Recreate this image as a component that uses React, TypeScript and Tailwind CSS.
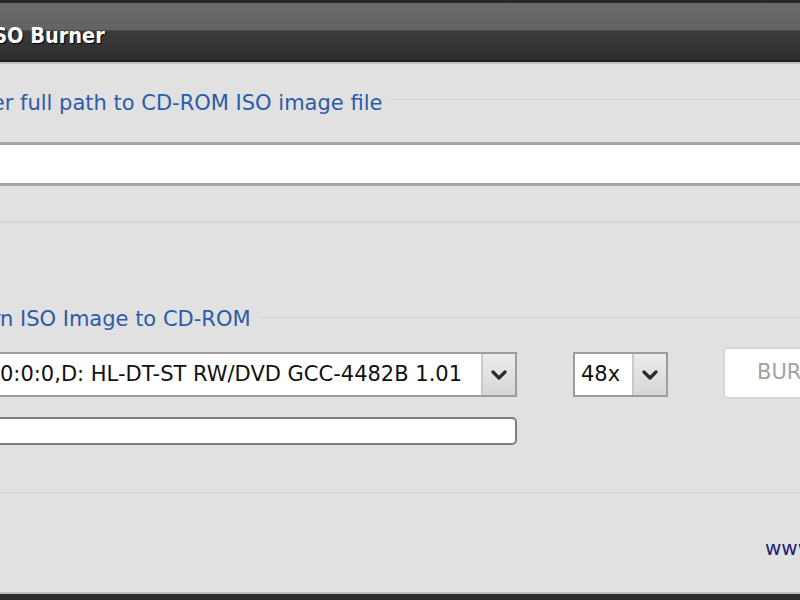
const ui = '[font-family:"DejaVu_Sans","Liberation_Sans",sans-serif]';

function Chevron() {
  return (
    <svg width="16" height="10" viewBox="0 0 16 10" className="block">
      <polyline points="2,2 8,8 14,2" fill="none" stroke="#2b2b2b" strokeWidth="3.2" strokeLinecap="round" strokeLinejoin="round" />
    </svg>
  );
}

function Combo({ value, className, textClass }: { value: string; className: string; textClass: string }) {
  return (
    <div className={`flex shrink-0 h-[45px] border-2 border-[#9c9c9c] bg-white ${className}`}>
      <div className={`flex-1 flex items-center overflow-hidden whitespace-nowrap text-[21px] text-[#111] ${textClass}`}>{value}</div>
      <div className="w-[34px] flex items-center justify-center border-l-2 border-[#c9c9c9] bg-[linear-gradient(to_bottom,#ececec,#d6d6d6)]">
        <Chevron />
      </div>
    </div>
  );
}

export default function App() {
  return (
    <div className={`w-[800px] h-[600px] overflow-hidden bg-[#e1e1e1] flex flex-col ${ui}`}>
      {/* title bar */}
      <div className="h-[62px] shrink-0 border-t-[3px] border-[#2a2a2a] bg-[linear-gradient(to_bottom,#6b6b6b_0%,#626262_46%,#3b3b3b_47%,#2e2e2e_95%,#1c1c1c_100%)] flex items-center pt-[8px]">
        <span className="-ml-[14px] text-[21.5px] font-bold text-white whitespace-nowrap [font-family:'DejaVu_Sans_Condensed','DejaVu_Sans',sans-serif] [text-shadow:1px_1px_1px_#000]">ISO Burner</span>
      </div>
      <div className="h-[2px] shrink-0 bg-[#c3c3c3]" />

      {/* source group */}
      <div className="mt-[26px] flex items-start">
        <span className="-ml-[43px] shrink-0 text-[21px] leading-[26px] text-[#2c5ca8] whitespace-nowrap">Enter full path to CD-ROM ISO image file</span>
        <div className="flex-1 ml-[8px] mt-[9px] h-px bg-[#d0d0d0]" />
      </div>
      <div className="mt-[26px] h-[44px] border-y-[3px] border-[#a3a3a3] bg-white" />
      <div className="mt-[35px] h-[2px] bg-[#d5d5d5]" />

      {/* burn group */}
      <div className="mt-[83px] flex items-start">
        <span className="-ml-[36px] shrink-0 text-[21px] leading-[26px] text-[#2c5ca8] whitespace-nowrap">Burn ISO Image to CD-ROM</span>
        <div className="flex-1 ml-[8px] mt-[11px] h-px bg-[#d0d0d0]" />
      </div>
      <div className="mt-[15px] flex items-start">
        <Combo value="0:0:0,D: HL-DT-ST RW/DVD GCC-4482B 1.01" className="mt-[5px] -ml-[20px] w-[537px]" textClass="pl-[18px]" />
        <Combo value="48x" className="mt-[5px] ml-[56px] w-[95px]" textClass="pl-[6px]" />
        <div className="ml-[55px] w-[110px] h-[52px] shrink-0 rounded-[5px] border-2 border-[#d6d6d6] bg-white flex items-center pl-[32px] text-[21px] text-[#a3a3a3]">BURN</div>
      </div>
      <div className="mt-[18px] -ml-[20px] w-[537px] h-[28px] rounded-[5px] border-2 border-[#7d7d7d] bg-white" />
      <div className="mt-[47px] h-[2px] bg-[#d9d9d9]" />

      {/* footer */}
      <div className="mt-[39px] flex justify-end">
        <span className="w-[35px] overflow-hidden whitespace-nowrap text-[20px] text-[#23237a]">www.</span>
      </div>
      <div className="flex-1" />
      <div className="h-[2px] shrink-0 bg-[#bcbcbc]" />
      <div className="h-[6px] shrink-0 bg-[#2c2c2c]" />
    </div>
  );
}
